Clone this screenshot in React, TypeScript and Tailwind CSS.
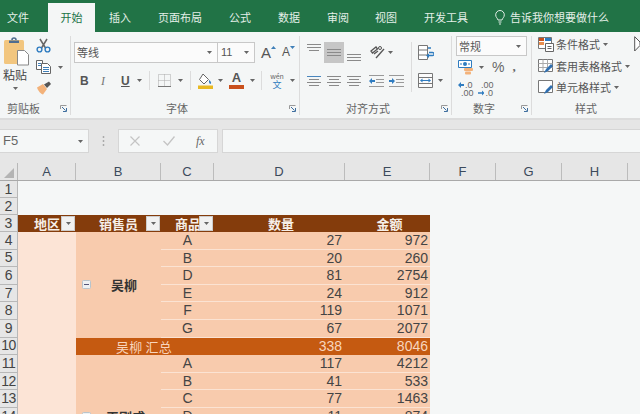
import React from "react";

const Caret = ({ className = "" }: { className?: string }) => (
  <svg width="5" height="3" viewBox="0 0 5 3" className={`shrink-0 ${className}`}>
    <path d="M0 0h5L2.5 3z" fill="#666" />
  </svg>
);

const Launcher = () => (
  <svg width="7" height="7" viewBox="0 0 7 7" className="shrink-0">
    <path d="M0.5 4V0.5H6.5" fill="none" stroke="#999" />
    <path d="M2 2l3.5 3.5M3 6.5h3.5V3" fill="none" stroke="#3f6f9f" />
  </svg>
);

const GroupLabel = ({ text, ml, launcher = true }: { text: string; ml: string; launcher?: boolean }) => (
  <div className="flex items-center h-[14px] pr-[3px]">
    <span className={`text-[11px] leading-[14px] text-[#666] ${ml}`}>{text}</span>
    {launcher && <span className="ml-auto flex"><Launcher /></span>}
  </div>
);

const lines = (rows: [number, number, string?][], w = 14) => (
  <svg width={w} height="14" viewBox={`0 0 ${w} 14`} className="shrink-0">
    {rows.map(([y, l, c], i) => (
      <path key={i} d={`M${(w - l) / 2} ${y + 0.5}h${l}`} stroke={c || "#8a8a8a"} />
    ))}
  </svg>
);

const Paste = () => (
  <svg width="27" height="30" viewBox="0 0 27 30" className="shrink-0">
    <rect x="1" y="4" width="20" height="24" rx="1.5" fill="#f2c67f" />
    <path d="M6 4.5h10V7H6z" fill="#4f6d8f" />
    <path d="M9 4a2 2 0 0 1 4 0" fill="none" stroke="#4f6d8f" strokeWidth="1.6" />
    <path d="M14.5 14.5h7l4 4v10.5h-11z" fill="#fff" stroke="#888" />
  </svg>
);
const Cut = () => (
  <svg width="15" height="15" viewBox="0 0 15 15" className="shrink-0">
    <path d="M4 1l5.5 9M11 1L5.5 10" stroke="#666" strokeWidth="1.5" fill="none" />
    <circle cx="3.5" cy="11.5" r="2.4" fill="none" stroke="#2f7cc0" strokeWidth="1.4" />
    <circle cx="11.5" cy="11.5" r="2.4" fill="none" stroke="#2f7cc0" strokeWidth="1.4" />
  </svg>
);
const Copy = () => (
  <svg width="15" height="14" viewBox="0 0 15 14" className="shrink-0">
    <path d="M.5.5h6v9h-6z" fill="#fff" stroke="#666" />
    <path d="M5.5 3.5h6l3 3v7h-9z" fill="#fff" stroke="#666" />
    <path d="M7 7.5h6M7 9.5h6M7 11.5h6M2 3.5h3M2 5.5h3" stroke="#3f7fb8" />
  </svg>
);
const Brush = () => (
  <svg width="16" height="14" viewBox="0 0 16 14" className="shrink-0">
    <path d="M1 6.5L7 3l4 5-4 5.5C5 13 2 10 1 6.5z" fill="#f3b27a" />
    <path d="M8 3.5l5-3 2 2.5-4 4z" fill="#555" />
  </svg>
);
const FontGrow = ({ blue, size }: { blue?: boolean; size: string }) => (
  <span className="flex items-start">
    <span className={`${size} leading-[17px] text-[#555] font-['Liberation_Sans',sans-serif]`}>A</span>
    <svg width="5" height="3" viewBox="0 0 5 3" className="mt-[2px]">
      <path d={blue ? "M0 0h5L2.5 3z" : "M0 3h5L2.5 0z"} fill="#3f7fb8" />
    </svg>
  </span>
);
const Borders = () => (
  <svg width="13" height="13" viewBox="0 0 13 13" className="shrink-0">
    <path d="M.5.5h12v12H.5zM.5 6.5h12M6.5.5v12" fill="none" stroke="#aaa" strokeDasharray="1 1" />
    <path d="M0 12.5h13" stroke="#777" />
  </svg>
);
const Fill = () => (
  <svg width="15" height="16" viewBox="0 0 15 16" className="shrink-0">
    <path d="M5 1l5.5 5.5L6 11 1.5 6.5z" fill="#fff" stroke="#666" />
    <path d="M11 7c1.5 1 2.5 2.500 2 3.500s-2.500 0-2-3.500z" fill="#2f7cc0" />
    <rect y="12.500" width="15" height="3.500" fill="#e8b923" />
  </svg>
);
const FontColor = () => (
  <span className="flex flex-col items-center w-[15px]">
    <span className="text-[13px] leading-[12px] font-bold text-[#555] font-['Liberation_Sans',sans-serif]">A</span>
    <span className="w-[15px] h-[4px] mt-[1px] bg-[#c9501c]" />
  </span>
);
const Wen = () => (
  <span className="flex flex-col items-center w-[16px] font-['Noto_Sans_CJK_SC',sans-serif]">
    <span className="text-[7px] leading-[8px] text-[#666]">wén</span>
    <span className="text-[9px] leading-[9px] text-[#2f7cc0]">文</span>
  </span>
);
const Orient = () => (
  <svg width="15" height="15" viewBox="0 0 15 15" className="shrink-0">
    <path d="M1 6l5-4 1.500 2-5 4zM4 9l4-3" fill="none" stroke="#555" strokeWidth="1.300" />
    <path d="M6 13L14 4" stroke="#555" strokeWidth="1.300" />
    <circle cx="10" cy="3" r="1.500" fill="none" stroke="#555" />
  </svg>
);
const Indent = ({ rev }: { rev?: boolean }) => (
  <svg width="15" height="14" viewBox="0 0 15 14" className="shrink-0">
    <path d="M0 1.500h15M7 5.500h8M7 8.500h8M0 12.500h15" stroke="#999" />
    <path d={rev ? "M0 7l3-3v2h3v2H3v2z" : "M6 7L3 4v2H0v2h3v2z"} fill="#2f7cc0" />
  </svg>
);
const Wrap = () => (
  <svg width="16" height="15" viewBox="0 0 16 15" className="shrink-0">
    <path d="M.5.5h9v14h-9zM.5 5h9M.5 10h9" fill="#fff" stroke="#777" />
    <path d="M10 3h3M11 7.500h3.500a1.500 1.500 0 0 1 0 3H10" fill="none" stroke="#2f7cc0" strokeWidth="1.300" />
    <path d="M11 8.500l-3 2 3 2.500z" fill="#2f7cc0" />
  </svg>
);
const Merge = () => (
  <svg width="15" height="15" viewBox="0 0 15 15" className="shrink-0">
    <path d="M.5.500h14v14H.5zM.5 4.500h14M.5 10.500h14" fill="#fbfbfb" stroke="#777" />
    <path d="M3 7.500h9" stroke="#2f7cc0" />
    <path d="M2 7.500l2.500-2v4zM13 7.500l-2.500-2v4z" fill="#2f7cc0" />
  </svg>
);
const Currency = () => (
  <svg width="16" height="15" viewBox="0 0 16 15" className="shrink-0">
    <path d="M.5.500h13v7H.5z" fill="#fff" stroke="#2f7cc0" />
    <path d="M3 3v2M11 3v2" stroke="#2f7cc0" />
    <circle cx="7" cy="4" r="2" fill="#2f7cc0" />
    <rect x="6" y="8" width="9" height="3" rx="1" fill="#f3b27a" />
    <rect x="7" y="11.500" width="6" height="3" rx="1" fill="#f3b27a" />
  </svg>
);
const Decimal = ({ up }: { up?: boolean }) => (
  <span className="flex flex-col w-[15px] text-[9px] leading-[8px] font-['Liberation_Sans',sans-serif] text-[#666]">
    {up ? (
      <>
        <span className="flex items-center gap-[1px]">
          <svg width="6" height="6" viewBox="0 0 6 6"><path d="M0 3l3-3v2h3v2H3v2z" fill="#2f7cc0" /></svg>.0
        </span>
        <span className="ml-[3px]">.00</span>
      </>
    ) : (
      <>
        <span className="ml-[3px]">.00</span>
        <span className="flex items-center gap-[1px]">
          <svg width="8" height="6" viewBox="0 0 8 6"><path d="M8 3L5 0v2H0v2h5v2z" fill="#2f7cc0" /></svg>.0
        </span>
      </>
    )}
  </span>
);
const CondFormat = () => (
  <svg width="16" height="15" viewBox="0 0 16 15" className="shrink-0">
    <path d="M.5.500h13v11H.5z" fill="#fff" stroke="#777" />
    <rect x="1" y="1" width="5" height="3" fill="#c9501c" />
    <rect x="1" y="5" width="5" height="3" fill="#e98e4f" />
    <rect x="7" y="1" width="6" height="3" fill="#2f7cc0" />
    <path d="M7.500 6.500h8v8h-8z" fill="#fff" stroke="#666" />
    <path d="M9.500 9.500h4M9.500 11.500h4" stroke="#666" />
  </svg>
);
const TableFmt = () => (
  <svg width="17" height="15" viewBox="0 0 17 15" className="shrink-0">
    <path d="M.5.500h14v12H.5z" fill="#fff" stroke="#777" />
    <path d="M5 .500v12M9.500.500v12M.5 4.500h14M.5 8.500h14" stroke="#aaa" />
    <path d="M6 14l2-4 5-5 2 2-5 5z" fill="#2f6fb0" />
  </svg>
);
const CellFmt = () => (
  <svg width="17" height="15" viewBox="0 0 17 15" className="shrink-0">
    <path d="M.5.500h14v12H.5z" fill="#fff" stroke="#777" />
    <path d="M6 14l2-4 5-5 2 2-5 5z" fill="#2f6fb0" />
  </svg>
);

const Tab = ({ t, cls }: { t: string; cls: string }) => (
  <span className={`text-[11px] leading-[14px] text-[#e4efe8] mt-[10px] shrink-0 ${cls}`}>{t}</span>
);

const cols = [
  { l: "A", w: "w-[58px]" },
  { l: "B", w: "w-[85px]" },
  { l: "C", w: "w-[53px]" },
  { l: "D", w: "w-[131px]" },
  { l: "E", w: "w-[85px]" },
  { l: "F", w: "w-[66px]" },
  { l: "G", w: "w-[66px]" },
  { l: "H", w: "w-[66px]" },
  { l: "", w: "w-[12px]" },
];

const Row = ({ c, d, e }: { c: string; d: number; e: number }) => (
  <div className="flex h-[17.6px] border-b border-[#fbe3d3] text-[14px] leading-[17px] text-[#444] font-['Liberation_Sans',sans-serif]">
    <span className="w-[53px] text-center">{c}</span>
    <span className="w-[131px] text-right pr-[3px]">{d}</span>
    <span className="w-[85px] text-right pr-[2px]">{e}</span>
  </div>
);

const Minus = () => (
  <svg width="9" height="9" viewBox="0 0 9 9" className="shrink-0">
    <rect x=".5" y=".5" width="8" height="8" rx="1" fill="#eef1f3" stroke="#b8c4cc" />
    <path d="M2 4.500h5" stroke="#557" />
  </svg>
);

const FilterBtn = ({ cls }: { cls: string }) => (
  <span className={`h-[15px] w-[14px] shrink-0 bg-[#f1f1f1] border border-[#ccc] flex items-center justify-center ${cls}`}>
    <Caret />
  </span>
);

const group1 = [
  { c: "A", d: 27, e: 972 },
  { c: "B", d: 20, e: 260 },
  { c: "D", d: 81, e: 2754 },
  { c: "E", d: 24, e: 912 },
  { c: "F", d: 119, e: 1071 },
  { c: "G", d: 67, e: 2077 },
];
const group2 = [
  { c: "A", d: 117, e: 4212 },
  { c: "B", d: 41, e: 533 },
  { c: "C", d: 77, e: 1463 },
  { c: "D", d: 11, e: 874 },
  { c: "E", d: 30, e: 660 },
  { c: "F", d: 52, e: 1040 },
  { c: "G", d: 40, e: 880 },
];

export default function App() {
  return (
    <div className="w-[640px] h-[414px] overflow-hidden bg-[#e6e6e6] font-['Noto_Sans_CJK_SC',sans-serif]">
      {/* Tabs */}
      <div className="flex h-[32px] bg-[#217346]">
        <Tab t="文件" cls="ml-[7px]" />
        <div className="ml-[19px] mt-[3px] h-[29px] w-[47px] bg-[#f4f6f6] flex justify-center shrink-0">
          <span className="text-[11px] leading-[14px] mt-[7px] text-[#217346]">开始</span>
        </div>
        <Tab t="插入" cls="ml-[14px]" />
        <Tab t="页面布局" cls="ml-[27px]" />
        <Tab t="公式" cls="ml-[27px]" />
        <Tab t="数据" cls="ml-[27px]" />
        <Tab t="审阅" cls="ml-[27px]" />
        <Tab t="视图" cls="ml-[26px]" />
        <Tab t="开发工具" cls="ml-[27px]" />
        <svg width="10" height="15" viewBox="0 0 10 15" className="ml-[27px] mt-[10px] shrink-0">
          <path d="M3 10C2.500 8 .7 7.500.7 4.800a4.300 4.300 0 0 1 8.600 0C9.300 7.500 7.500 8 7 10zM3.500 12h3M4 14h2" fill="none" stroke="#e4efe8" />
        </svg>
        <Tab t="告诉我你想要做什么" cls="ml-[5px]" />
      </div>

      {/* Ribbon */}
      <div className="flex h-[88px] pt-[4px] bg-[#f4f6f6] border-b-2 border-[#dcdcdc]">
        {/* Clipboard */}
        <div className="w-[71px] h-[79px] shrink-0 border-r border-[#dcdcdc] flex flex-col">
          <div className="flex h-[65px]">
            <div className="w-[36px] flex flex-col pl-[3px]">
              <Paste />
              <span className="text-[12px] leading-[14px] mt-[2px] text-[#444] whitespace-nowrap">粘贴</span>
              <Caret className="ml-[10px] mt-[5px]" />
            </div>
            <div className="flex flex-col pt-[2px]">
              <Cut />
              <div className="flex items-center gap-[7px] mt-[7px]">
                <Copy />
                <Caret />
              </div>
              <div className="mt-[7px]"><Brush /></div>
            </div>
          </div>
          <GroupLabel text="剪贴板" ml="ml-[7px]" />
        </div>

        {/* Font */}
        <div className="w-[229px] h-[79px] shrink-0 border-r border-[#dcdcdc] flex flex-col">
          <div className="h-[65px] flex flex-col pt-[6px]">
            <div className="flex items-center h-[21px] pl-[3px]">
              <div className="w-[144px] h-[21px] bg-[#fbfbfb] border border-[#c8c8c8] flex items-center pl-[2px] pr-[5px] justify-between">
                <span className="text-[11px] text-[#555]">等线</span>
                <Caret />
              </div>
              <div className="w-[37px] h-[21px] bg-[#fbfbfb] border border-l-0 border-[#c8c8c8] flex items-center pl-[3px] pr-[5px] justify-between">
                <span className="text-[11px] text-[#555] font-['Liberation_Sans',sans-serif]">11</span>
                <Caret />
              </div>
              <div className="ml-[6px]"><FontGrow size="text-[15px]" /></div>
              <div className="ml-[6px]"><FontGrow blue size="text-[12px]" /></div>
            </div>
            <div className="flex items-center h-[21px] mt-[7px] pl-[9px] text-[#555] font-['Liberation_Sans',sans-serif]">
              <span className="w-[8px] text-[12px] font-bold">B</span>
              <span className="ml-[13px] w-[6px] text-[12px] italic text-[#777] font-['Liberation_Serif',serif]">I</span>
              <span className="ml-[14px] w-[8px] text-[12px] font-bold underline">U</span>
              <Caret className="ml-[8px]" />
              <span className="w-px h-[19px] bg-[#dcdcdc] ml-[7px]" />
              <span className="ml-[8px]"><Borders /></span>
              <Caret className="ml-[7px]" />
              <span className="w-px h-[19px] bg-[#dcdcdc] ml-[7px]" />
              <span className="ml-[7px]"><Fill /></span>
              <Caret className="ml-[5px]" />
              <span className="ml-[6px]"><FontColor /></span>
              <Caret className="ml-[6px]" />
              <span className="w-px h-[19px] bg-[#dcdcdc] ml-[6px]" />
              <span className="ml-[7px]"><Wen /></span>
              <Caret className="ml-[5px]" />
            </div>
          </div>
          <GroupLabel text="字体" ml="ml-[95px]" />
        </div>

        {/* Alignment */}
        <div className="w-[152px] h-[79px] shrink-0 border-r border-[#dcdcdc] flex flex-col">
          <div className="h-[65px] flex pt-[6px]">
            <div className="w-[111px] flex flex-col pl-[4px]">
              <div className="flex items-center h-[21px]">
                <span className="w-[20px] h-[21px] flex justify-center items-start pt-[1px]">{lines([[1, 14], [4, 14], [7, 10]])}</span>
                <span className="w-[20px] h-[21px] flex justify-center items-center bg-[#c6c6c6]">{lines([[3, 14], [6, 14], [9, 14]])}</span>
                <span className="w-[20px] h-[21px] flex justify-center items-end pb-[1px]">{lines([[6, 14], [9, 14], [12, 14]])}</span>
                <span className="ml-[6px]"><Orient /></span>
                <Caret className="ml-[3px]" />
              </div>
              <div className="flex items-center h-[21px] mt-[7px]">
                <span className="w-[20px] flex justify-center">{lines([[2, 14, "#4a86bd"], [5, 10], [8, 14], [11, 10]])}</span>
                <span className="w-[20px] flex justify-center">{lines([[2, 14], [5, 10], [8, 14], [11, 10]])}</span>
                <span className="w-[20px] flex justify-center">{lines([[2, 14], [5, 10], [8, 14], [11, 10]])}</span>
                <span className="ml-[5px]"><Indent rev /></span>
                <span className="ml-[5px]"><Indent /></span>
              </div>
            </div>
            <span className="w-px h-[50px] bg-[#dcdcdc]" />
            <div className="flex flex-col pl-[6px]">
              <div className="flex items-center h-[21px]"><Wrap /></div>
              <div className="flex items-center h-[21px] mt-[7px] gap-[5px]"><Merge /><Caret /></div>
            </div>
          </div>
          <GroupLabel text="对齐方式" ml="ml-[46px]" />
        </div>

        {/* Number */}
        <div className="w-[80px] h-[79px] shrink-0 border-r border-[#dcdcdc] flex flex-col">
          <div className="h-[65px] flex flex-col pl-[4px]">
            <div className="w-[71px] h-[20px] bg-[#fbfbfb] border border-[#c8c8c8] flex items-center justify-between pl-[2px] pr-[5px]">
              <span className="text-[11px] text-[#555]">常规</span>
              <Caret />
            </div>
            <div className="flex items-center h-[16px] mt-[3px] pl-[2px]">
              <Currency />
              <Caret className="ml-[5px]" />
              <span className="ml-[8px] text-[14px] leading-[16px] text-[#666] font-['Liberation_Sans',sans-serif]">%</span>
              <span className="ml-[8px] text-[13px] leading-[14px] font-bold text-[#666] font-['Liberation_Serif',serif]">,</span>
            </div>
            <div className="flex items-center h-[16px] mt-[6px] pl-[2px] gap-[5px]">
              <Decimal up />
              <Decimal />
            </div>
          </div>
          <GroupLabel text="数字" ml="ml-[21px]" />
        </div>

        {/* Styles */}
        <div className="w-[108px] h-[79px] shrink-0 flex flex-col overflow-hidden">
          <div className="h-[65px] flex flex-col pl-[6px] text-[11px] text-[#555]">
            <div className="flex items-center h-[16px]">
              <CondFormat /><span className="ml-[2px]">条件格式</span><Caret className="ml-[3px]" />
              <svg width="6" height="16" viewBox="0 0 6 16" className="ml-auto shrink-0">
                <path d="M.7.700V15L6 9.500V6z" fill="#fff" stroke="#555" />
              </svg>
            </div>
            <div className="flex items-center h-[16px] mt-[6px]">
              <TableFmt /><span className="ml-px">套用表格格式</span><Caret className="ml-[3px]" />
            </div>
            <div className="flex items-center h-[16px] mt-[5px]">
              <CellFmt /><span className="ml-px">单元格样式</span><Caret className="ml-[3px]" />
            </div>
          </div>
          <GroupLabel text="样式" ml="ml-[43px]" launcher={false} />
        </div>
      </div>

      {/* Formula bar */}
      <div className="flex items-center h-[24px] mt-[9px]">
        <div className="w-[89px] h-[24px] bg-[#f5f7f7] border border-l-0 border-[#d6d6d6] flex items-center justify-between pr-[5px] shrink-0">
          <span className="text-[13px] text-[#666] pl-[3px] font-['Liberation_Sans',sans-serif]">F5</span>
          <Caret />
        </div>
        <svg width="3" height="11" viewBox="0 0 3 11" className="ml-[13px] shrink-0">
          <path d="M1.500 0v2M1.500 4v2M1.500 8v2" stroke="#aaa" strokeWidth="1.500" />
        </svg>
        <div className="ml-[13px] w-[100px] h-[24px] bg-[#f5f7f7] border border-[#d6d6d6] flex items-center shrink-0">
          <svg width="10" height="10" viewBox="0 0 10 10" className="ml-[11px] shrink-0">
            <path d="M.5.500l9 9M9.500.500l-9 9" stroke="#c4c4c4" strokeWidth="1.200" />
          </svg>
          <svg width="12" height="10" viewBox="0 0 12 10" className="ml-[23px] shrink-0">
            <path d="M.5 5l4 4 7-8.500" fill="none" stroke="#c4c4c4" strokeWidth="1.300" />
          </svg>
          <span className="ml-[21px] text-[12px] italic text-[#666] font-['Liberation_Serif',serif]">fx</span>
        </div>
        <div className="ml-[4px] flex-1 h-[24px] bg-[#f5f7f7] border border-r-0 border-[#d6d6d6]" />
      </div>

      {/* Column header */}
      <div className="flex h-[18px] mt-[10px] border-b border-[#a9a9a9]">
        <div className="w-[18px] shrink-0 border-r border-[#b8b8b8] flex items-end justify-end pr-[3px] pb-[2px]">
          <svg width="10" height="10" viewBox="0 0 10 10"><path d="M10 0v10H0z" fill="#b4b4b4" /></svg>
        </div>
        {cols.map((c) => (
          <div key={c.l} className={`${c.w} shrink-0 border-r border-[#bcbcbc] flex items-center justify-center text-[13px] leading-[17px] text-[#3c4a5c] font-['Liberation_Sans',sans-serif] last:border-r-0`}>
            {c.l}
          </div>
        ))}
      </div>

      {/* Sheet */}
      <div className="flex">
        <div className="w-[18px] shrink-0 flex flex-col">
          {[1, 2, 3].map((n) => (
            <div key={n} className="h-[17px] border-b border-r border-[#b8b8b8] flex items-center justify-center text-[14px] text-[#444] font-['Liberation_Sans',sans-serif]">{n}</div>
          ))}
          {[4, 5, 6, 7, 8, 9, 10, 11, 12, 13, 14, 15].map((n) => (
            <div key={n} className="h-[17.6px] shrink-0 border-b border-r border-[#b8b8b8] flex items-center justify-center text-[14px] text-[#444] font-['Liberation_Sans',sans-serif] tracking-[-0.5px]">{n}</div>
          ))}
        </div>
        <div className="flex-1 bg-[#f5f7f7]">
          <div className="h-[34px]" />
          <div className="w-[412px] h-[17px] bg-[#843c0c] flex items-center text-[13px] font-bold text-[#f6efe8]">
            <div className="w-[58px] flex items-center pl-[16px] pr-px"><span className="shrink-0 whitespace-nowrap">地区</span><FilterBtn cls="ml-auto" /></div>
            <div className="w-[85px] flex items-center pl-[23px] pr-px"><span className="shrink-0 whitespace-nowrap">销售员</span><FilterBtn cls="ml-auto" /></div>
            <div className="w-[53px] flex items-center pl-[14px] pr-px"><span className="shrink-0 whitespace-nowrap w-[24px]">商品</span><FilterBtn cls="ml-auto relative" /></div>
            <div className="w-[131px] text-center pl-[3px]">数量</div>
            <div className="w-[85px] text-center pl-[4px]">金额</div>
          </div>
          <div className="flex w-[412px]">
            <div className="w-[58px] h-[300px] bg-[#fce4d6] shrink-0" />
            <div className="w-[354px] bg-[#f8cbad]">
              <div className="flex">
                <div className="w-[85px] flex items-center pl-[6px] shrink-0">
                  <Minus />
                  <span className="ml-[20px] text-[13px] font-bold text-[#333]">吴柳</span>
                </div>
                <div className="flex-1">
                  {group1.map((r) => <Row key={r.c} {...r} />)}
                </div>
              </div>
              <div className="flex items-center h-[17.6px] bg-[#c55a11] text-[#f8d5bd]">
                <span className="ml-[40px] w-[145px] shrink-0 text-[13px] tracking-[0.2px] whitespace-nowrap">吴柳 汇总</span>
                <span className="w-[84px] text-right text-[14px] pr-[3px] font-['Liberation_Sans',sans-serif]">338</span>
                <span className="w-[85px] text-right text-[14px] pr-[2px] font-['Liberation_Sans',sans-serif]">8046</span>
              </div>
              <div className="flex">
                <div className="w-[85px] flex items-center pl-[6px] shrink-0">
                  <Minus />
                  <span className="ml-[15px] text-[13px] font-bold text-[#333]">王刚成</span>
                </div>
                <div className="flex-1">
                  {group2.map((r) => <Row key={r.c} {...r} />)}
                </div>
              </div>
            </div>
          </div>
        </div>
      </div>
    </div>
  );
}
